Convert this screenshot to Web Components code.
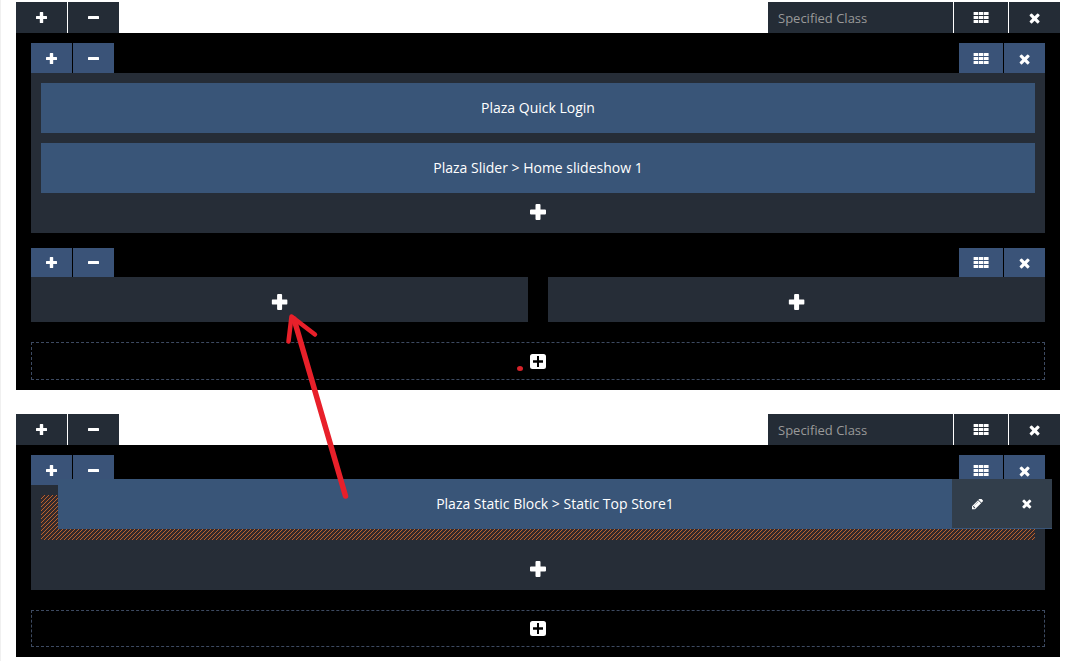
<!DOCTYPE html>
<html lang="en"><head><meta charset="utf-8"><title>Layout builder</title>
<style>
body{margin:0;background:#fff;font-family:"Open Sans",sans-serif;overflow:hidden}
</style></head><body>
<layout-page>
  <layout-section>
    <layout-row>
      <layout-column>
        <module-block>Plaza Quick Login</module-block>
        <module-block>Plaza Slider &gt; Home slideshow 1</module-block>
      </layout-column>
    </layout-row>
    <layout-row style="--bar:29px;--pad:9px">
      <layout-column empty></layout-column>
      <layout-column empty></layout-column>
    </layout-row>
    <add-row style="margin-top:20px"></add-row>
  </layout-section>
  <layout-section>
    <layout-row>
      <layout-column style="--add-gap:21px;--add-end:13px">
        <drop-placeholder><module-block dragging>Plaza Static Block &gt; Static Top Store1</module-block></drop-placeholder>
      </layout-column>
    </layout-row>
    <add-row style="margin-top:20px;--h:35px;--icon-top:10px"></add-row>
  </layout-section>
  <arrow-note slot="overlay"></arrow-note>
</layout-page>
<script>
const define=(name,html)=>customElements.define(name,class extends HTMLElement{
  constructor(){super();this.attachShadow({mode:'open'})}
  connectedCallback(){
    const t=document.createElement('template');
    t.innerHTML=typeof html==='function'?html(this):html;
    this.shadowRoot.replaceChildren(t.content.cloneNode(true));
  }
});
const times='M1490 1322q0 40-28 68l-136 136q-28 28-68 28t-68-28l-294-294-294 294q-28 28-68 28t-68-28l-136-136q-28-28-28-68t28-68l294-294-294-294q-28-28-28-68t28-68l136-136q28-28 68-28t68 28l294 294 294-294q28-28 68-28t68 28l136 136q28 28 28 68t-28 68l-294 294 294 294q28 28 28 68z';
const pencil='M491 1536l91-91-235-235-91 91v107h128v128h107zm523-928q0-22-22-22-10 0-17 7l-542 542q-7 7-7 17 0 22 22 22 10 0 17-7l542-542q7-7 7-17zm-54-192l416 416-832 832h-416v-416zm683 96q0 53-37 90l-166 166-416-416 166-165q36-38 90-38 53 0 91 38l235 234q37 39 37 91z';
const cells=[0,4,8].map(y=>[.6,5.8,11].map(x=>`<rect x="${x}" y="${y}" width="4.600" height="3" rx=".3"/>`).join('')).join('');
const icons={
  plus:[11,11,'0 0 11 11','<path d="M4.400 0h2.200q.6 0 .6.6V4h3.200q.6 0 .6.6v1.800q0 .6-.6.6H7.200v3.400q0 .6-.6.6H4.400q-.6 0-.6-.6V7H.6Q0 7 0 6.400V4.600Q0 4 .6 4h3.200V.6q0-.6.6-.6z"/>'],
  minus:[11,11,'0 0 11 11','<rect y="4" width="11" height="3" rx=".5"/>'],
  grid:[16,11,'0 0 16 11',cells],
  times:[11,12,'230 190 1307 1426',`<path d="${times}"/>`],
  close:[10,10,'260 290 1320 1320',`<path d="${times}"/>`],
  pencil:[11,11,'128 256 1515 1515',`<path d="${pencil}"/>`],
  add:[16,16,'0 0 16 16','<path d="M6.500 0h3q1 0 1 1v4.500H15q1 0 1 1v3q0 1-1 1h-4.500V15q0 1-1 1h-3q-1 0-1-1v-4.500H1q-1 0-1-1v-3q0-1 1-1h4.500V1q0-1 1-1z"/>'],
  square:[16,15,'0 0 16 15','<path fill-rule="evenodd" d="M2.500 0h11Q16 0 16 2.500v10q0 2.500-2.500 2.500h-11Q0 15 0 12.500v-10Q0 0 2.500 0zM7 2v4.300H3v2.400h4V13h2V8.700h4V6.300H9V2z"/>']
};
define('ui-icon',e=>{const [w,h,v,p]=icons[e.getAttribute('name')];
  return `<style>:host{display:block;flex:none;color:#fff}svg{display:block}</style><svg width="${w}" height="${h}" viewBox="${v}" fill="currentColor">${p}</svg>`});
define('tool-button',e=>`<style>:host{display:flex;justify-content:center;align-items:flex-start;box-sizing:border-box;height:100%;width:var(--w);padding-top:var(--pad,10px);background:var(--btn)}</style><ui-icon name="${e.getAttribute('icon')}"></ui-icon>`);
define('tool-bar',`<style>:host{display:flex;justify-content:space-between;height:var(--bar)}div{display:flex;gap:1px}</style><div><slot name="start"></slot></div><div><slot></slot></div>`);
define('class-field',`<style>:host{display:flex;align-items:center;box-sizing:border-box;width:185px;height:100%;padding:0 10px;background:#242c36;color:#999;font-size:13px;line-height:18px;white-space:nowrap}</style><span><slot></slot></span>`);
const buttons=`<tool-button slot="start" icon="plus"></tool-button><tool-button slot="start" icon="minus"></tool-button>`;
define('layout-section',`<style>:host{display:block}
 .head{--bar:31px;--btn:#242c36;--w:51px;--pad:10px}.wide{--w:54px}
 .body{display:flow-root;background:#000;padding:10px 15px}</style>
 <tool-bar class="head">${buttons}<class-field>Specified Class</class-field><tool-button class="wide" icon="grid"></tool-button><tool-button icon="times"></tool-button></tool-bar>
 <div class="body"><slot></slot></div>`);
define('layout-row',`<style>:host{display:block}:host(:not(:first-child)){margin-top:15px}
 tool-bar{--btn:#3a5378;--w:41px}.wide{--w:44px}.cols{display:flex;gap:20px}</style>
 <tool-bar style="height:var(--bar,30px)">${buttons}<tool-button class="wide" icon="grid"></tool-button><tool-button icon="times"></tool-button></tool-bar>
 <div class="cols"><slot></slot></div>`);
define('layout-column',`<style>:host{display:flex;flex-direction:column;flex:1;background:#262d37;padding:10px 10px 0}
 :host([empty]){padding-top:17px;--add-gap:0px;--add-end:12px}
 :host([empty]) .add{padding-right:1px}
 .mods{display:flex;flex-direction:column;gap:10px}
 .add{display:flex;justify-content:center;padding:var(--add-gap,11px) 0 var(--add-end,13px)}
 :host([empty]) ui-icon{transform:translateX(.6px)}</style>
 <div class="mods"><slot></slot></div><div class="add"><ui-icon name="add"></ui-icon></div>`);
define('module-block',e=>`<style>:host{display:flex;height:50px;background:#395578;color:#fff;font-size:14px;line-height:20px}
 :host([dragging]){position:absolute;left:17px;top:-16px;width:994px}
 .label{flex:1;display:flex;align-items:center;justify-content:center;white-space:nowrap}
 :host([dragging]) .label{padding-left:100px}
 .tools{display:flex;height:49px;background:#323e4b}
 .tools div{width:50px;display:flex;align-items:center;justify-content:center;padding-top:1px;box-sizing:border-box}</style>
 <div class="label"><span><slot></slot></span></div>${e.hasAttribute('dragging')?'<div class="tools"><div><ui-icon name="pencil"></ui-icon></div><div><ui-icon name="close"></ui-icon></div></div>':''}`);
define('drop-placeholder',`<style>:host{display:block;position:relative;height:45px}svg{display:block}</style>
 <svg width="994" height="45" shape-rendering="crispEdges"><defs><pattern id="h" width="4" height="4" patternUnits="userSpaceOnUse"><rect width="4" height="4" fill="#33292b"/><path fill="#b9622f" d="M0 3h1v1H0zM1 2h1v1H1zM2 1h1v1H2zM3 0h1v1H3z"/></pattern></defs><rect width="994" height="45" fill="url(#h)"/></svg><slot></slot>`);
define('add-row',`<style>:host{display:flex;justify-content:center;align-items:flex-start;height:var(--h,36px);border:1px dashed #3d4a61}ui-icon{margin-top:var(--icon-top,11px)}</style><ui-icon name="square"></ui-icon>`);
define('arrow-note',`<style>:host{position:absolute;left:-1px;top:0;pointer-events:none}svg{display:block}</style>
 <svg width="1075" height="661" fill="none" stroke="#e8202a" stroke-linecap="round" stroke-linejoin="round"><path stroke-width="5.500" d="M345.500 496L294 319"/><path stroke-width="4.500" d="M288.500 341.500L291.500 316.500 315 334.500"/><ellipse cx="520" cy="368.500" rx="3" ry="2.500" fill="#d8232a" stroke="none"/></svg>`);
define('layout-page',`<style>:host{display:block;position:relative;box-sizing:border-box;width:1075px;height:661px;padding:2px 15px 0 15px;border-left:1px solid #f0f0f0}
 main{display:flex;flex-direction:column;gap:24px}</style><main><slot></slot></main><slot name="overlay"></slot>`);
</script></body></html>
